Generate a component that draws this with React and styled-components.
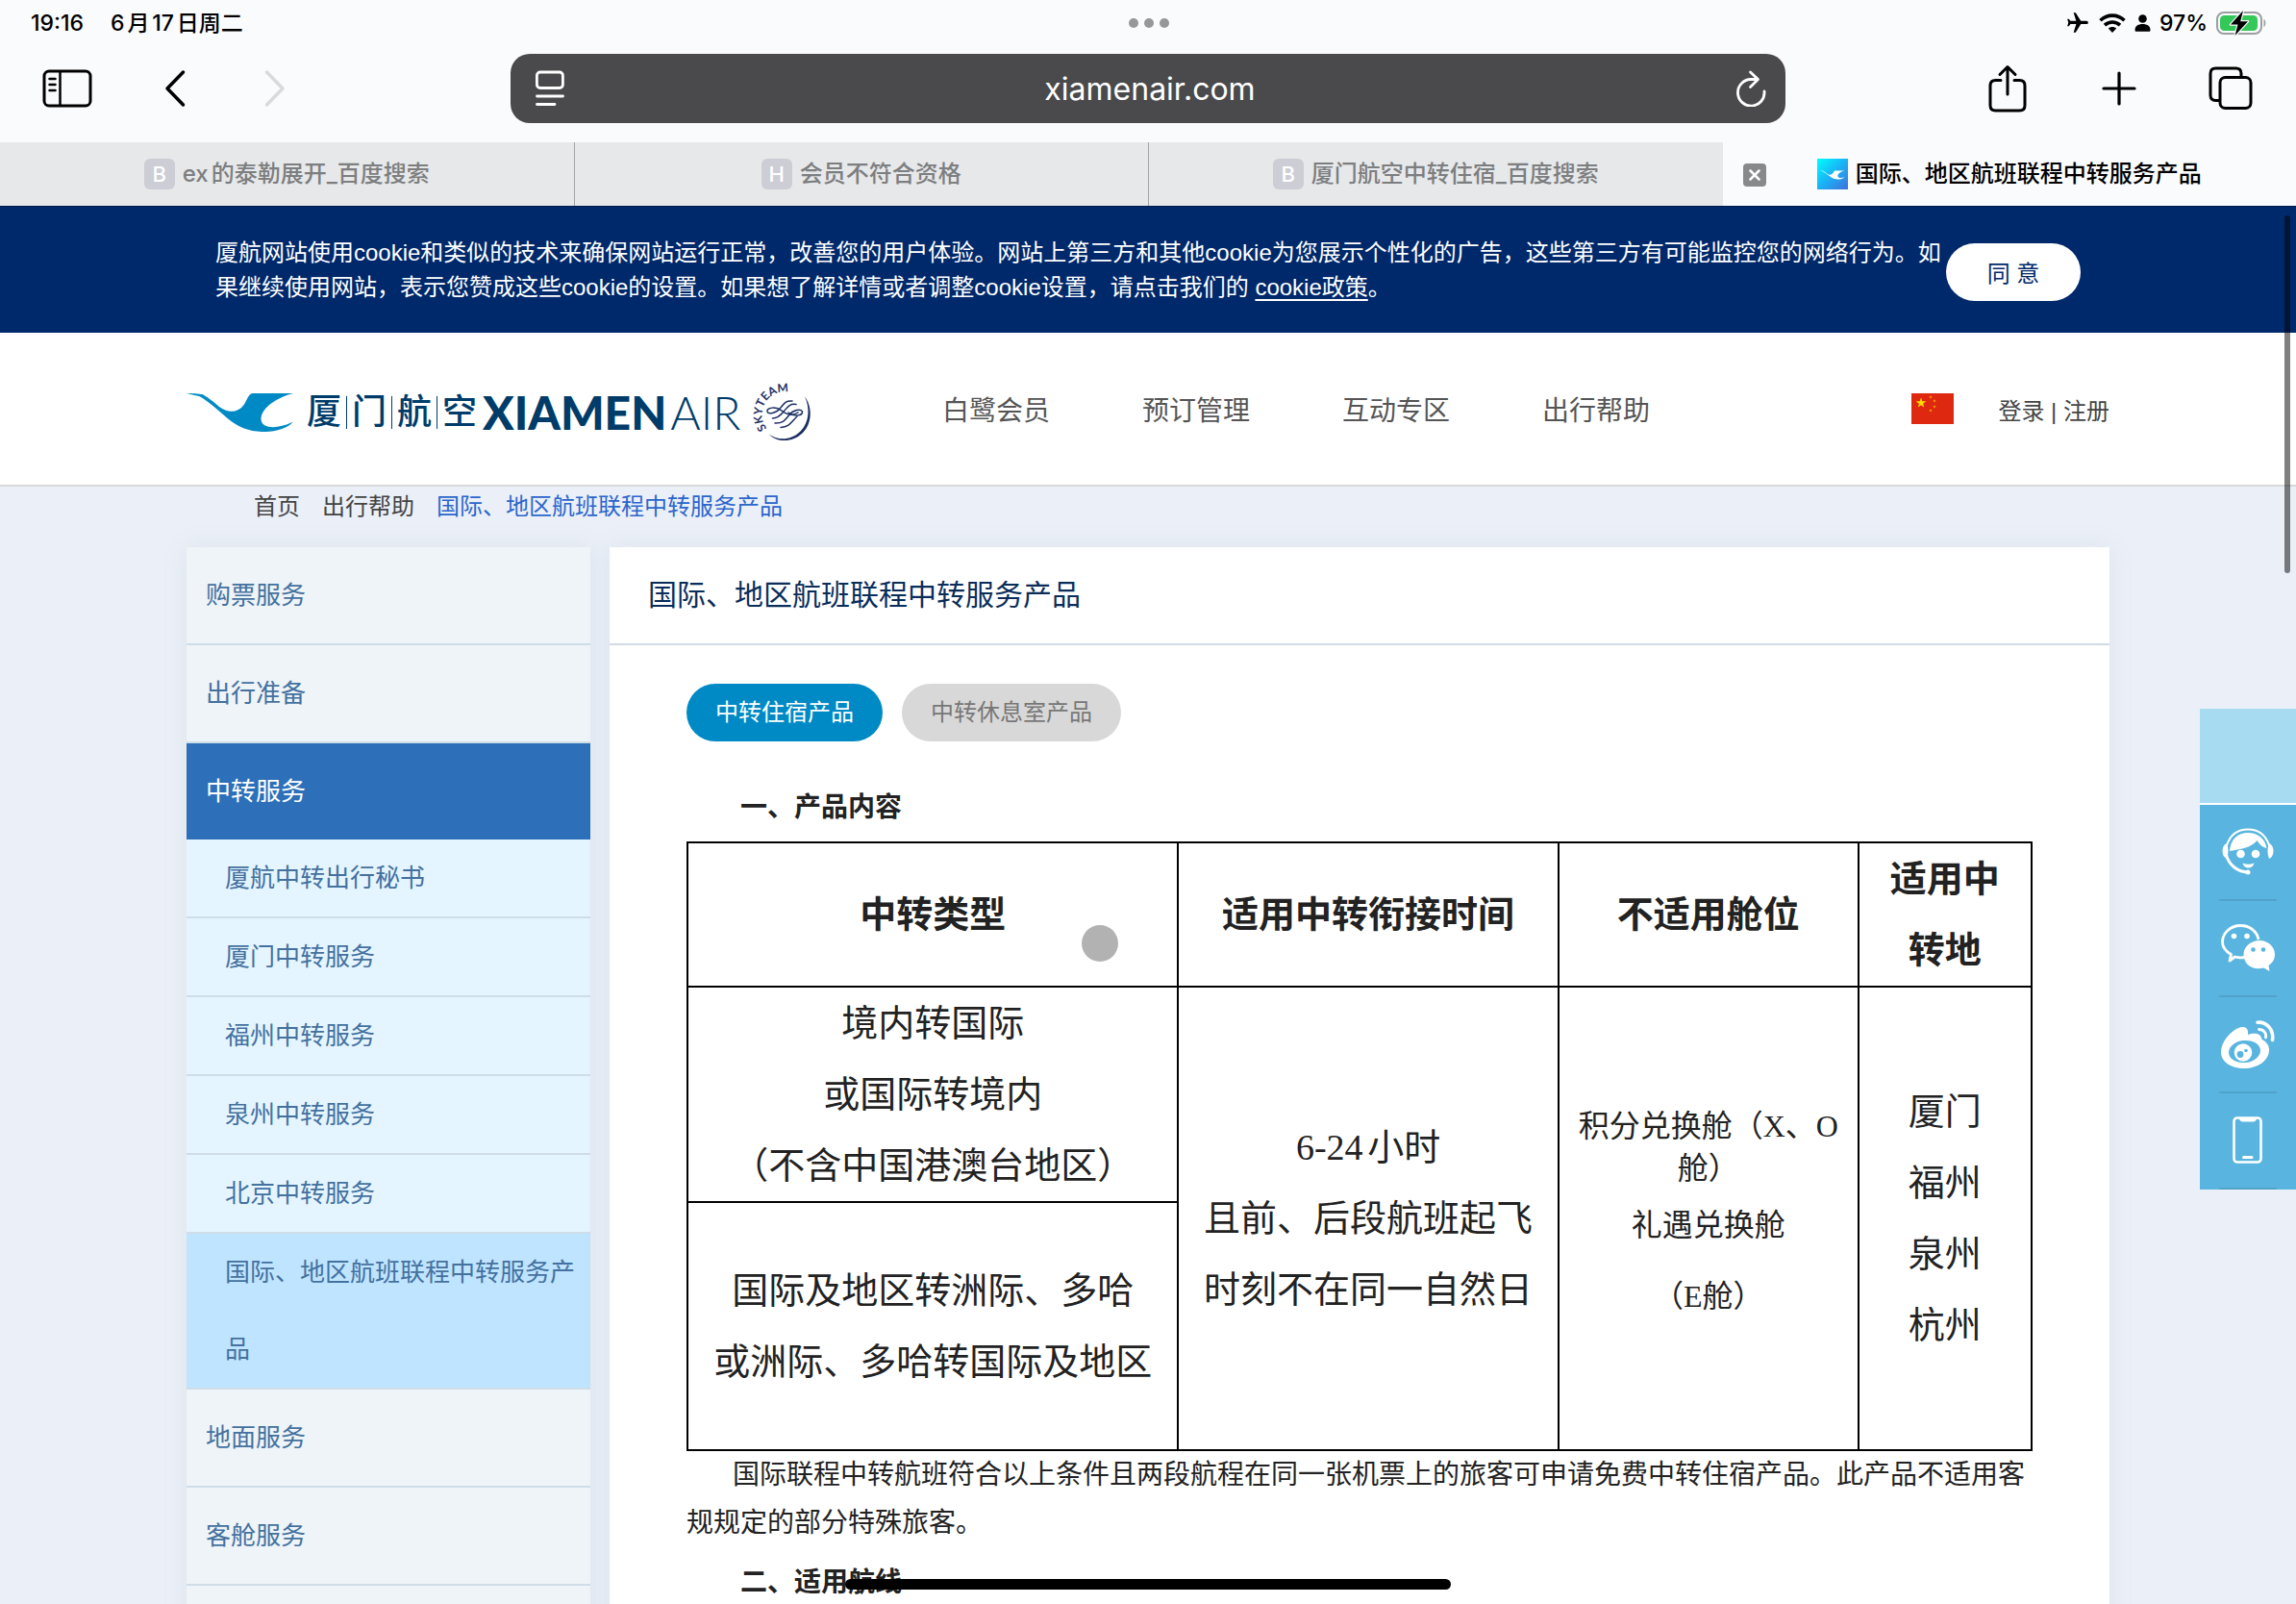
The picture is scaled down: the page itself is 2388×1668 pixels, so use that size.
import React from "react";
import styled, { createGlobalStyle, css } from "styled-components";
import { MdFlight } from "react-icons/md";

const sans = `"Liberation Sans", "Noto Sans CJK SC", sans-serif`;
const system = `Inter, "Noto Sans CJK SC", sans-serif`;
const serif = `"Liberation Serif", "Noto Sans CJK SC", serif`;

const GlobalStyle = createGlobalStyle`
  *, *::before, *::after { box-sizing: border-box; }
  body { margin: 0; background: #ebf0f8; font-family: ${sans}; font-size: 24px; }
  h1, h2, p, ul, ol { margin: 0; padding: 0; }
  ul, ol { list-style: none; }
  a { color: inherit; text-decoration: none; }
  button { margin: 0; padding: 0; border: 0; background: none; font: inherit; color: inherit; cursor: pointer; }
  svg { display: block; }
`;

const Screen = styled.div`
  position: relative;
  display: flex;
  flex-direction: column;
  height: 100vh;
  overflow: hidden;
`;

/* ---------- browser chrome ---------- */

const Chrome = styled.header`
  flex: none;
  background: #fafbfd;
  color: #000;
  font-family: ${system};
`;

const StatusBar = styled.div`
  display: grid;
  grid-template-columns: 1fr auto 1fr;
  align-items: center;
  height: 48px;
  padding: 0 30px 0 32px;
  font-size: 23px;
  font-weight: 500;
  line-height: 32px;
  text-autospace: normal;
`;

const StatusGroup = styled.div`
  display: flex;
  align-items: center;
  justify-content: ${(p) => (p.$end ? "flex-end" : "flex-start")};
  gap: ${(p) => (p.$end ? 9 : 28)}px;
`;

const Dots = styled.button`
  display: flex;
  gap: 6px;
  span {
    width: 10px;
    height: 10px;
    border-radius: 50%;
    background: #969799;
  }
`;

const Plane = styled(MdFlight)`
  width: 26px;
  height: 26px;
  transform: rotate(90deg);
`;

const Toolbar = styled.div`
  display: grid;
  grid-template-columns: 2fr 5fr 2fr;
  align-items: center;
  padding: 8px 0 20px;
`;

const Tools = styled.div`
  display: flex;
  justify-content: ${(p) => (p.$end ? "flex-end" : "flex-start")};
  gap: ${(p) => (p.$end ? 60 : 48)}px;
  padding: ${(p) => (p.$end ? "0 40px 0 0" : "0 0 0 34px")};
`;

const Tool = styled.button`
  display: flex;
  align-items: center;
  justify-content: center;
  width: ${(p) => (p.$wide ? 72 : 56)}px;
  height: 56px;
  color: ${(p) => (p.disabled ? "#d9dadc" : "#000")};
`;

const AddressBar = styled.div`
  display: flex;
  align-items: center;
  height: 72px;
  padding: 0 20px 0 26px;
  border-radius: 20px;
  background: #4a4a4c;
  color: #fff;
`;

const Address = styled.input`
  flex: 1;
  min-width: 0;
  border: 0;
  outline: 0;
  background: none;
  color: inherit;
  font-family: ${system};
  font-size: 32px;
  text-align: center;
`;

const TabStrip = styled.div`
  display: flex;
  height: 66px;
`;

const Tab = styled.div`
  position: relative;
  flex: 1;
  display: flex;
  align-items: center;
  justify-content: center;
  gap: 8px;
  border-right: ${(p) => (p.$divided ? "1px solid #a3a4a6" : "0")};
  font-size: 24px;
  font-weight: 500;
  line-height: 32px;
  text-autospace: normal;
  color: ${(p) => (p.$active ? "#000" : "#7c7e80")};
  background: ${(p) => (p.$active ? "#fafbfd" : "#e7e8ea")};
`;

const Letter = styled.span`
  display: flex;
  align-items: center;
  justify-content: center;
  width: 32px;
  height: 32px;
  border-radius: 6px;
  background: #cdcdd5;
  color: #fff;
  font-size: 22px;
`;

const CloseTab = styled.button`
  position: absolute;
  left: 21px;
  top: 22px;
  display: flex;
  align-items: center;
  justify-content: center;
  width: 24px;
  height: 24px;
  border-radius: 4px;
  background: #88898b;
`;

/* ---------- site ---------- */

const Cookie = styled.section`
  flex: none;
  border-top: 1px solid #001d4d;
  background: #00296b;
  color: #fff;
`;

const Container = styled.div`
  width: 100%;
  max-width: 2000px;
  margin: 0 auto;
`;

const CookieInner = styled(Container)`
  display: flex;
  align-items: center;
  height: 131px;
  padding: 4px 30px 0;
`;

const CookieText = styled.p`
  flex: 1;
  max-width: 1800px;
  padding-bottom: 4px;
  line-height: 36px;
  a { text-decoration: underline; text-underline-offset: 4px; }
`;

const Agree = styled.button`
  flex: none;
  width: 140px;
  height: 60px;
  border-radius: 30px;
  background: #fff;
  color: #00296b;
`;

const SiteHeader = styled.header`
  flex: none;
  border-bottom: 2px solid #d8d8d8;
  background: #fff;
`;

const SiteHeaderInner = styled(Container)`
  display: flex;
  align-items: center;
  height: 158px;
`;

const Logo = styled.a`
  display: flex;
  align-items: center;
  width: 786px;
  padding-top: 8px;
  color: #003c69;
`;

const LogoHan = styled.span`
  display: flex;
  align-items: center;
  gap: 5px;
  margin: 0 6px 0 13px;
  font-size: 36px;
  font-weight: 500;
  line-height: 40px;
  i {
    width: 1px;
    height: 34px;
    background: #003c69;
  }
`;

const LogoLatin = styled.span`
  margin-right: 14px;
  font-family: Lato, sans-serif;
  font-size: 48px;
  font-weight: 300;
  line-height: 46px;
  b {
    margin-right: 4px;
    font-weight: 900;
  }
`;

const SkyTeamMark = styled.svg`
  overflow: visible;
`;

const MainNav = styled.nav`
  display: flex;
  flex: 1;
  gap: 96px;
  color: #555;
  font-size: 28px;
`;

const Account = styled.div`
  display: flex;
  align-items: center;
  gap: 46px;
  color: #444;
`;

const Crumbs = styled.ol`
  display: flex;
  gap: 23px;
  height: 63px;
  padding: 0 70px;
  color: #444;
  line-height: 42px;
  [aria-current] { color: #2b66cc; }
`;

const Columns = styled(Container)`
  display: flex;
  gap: 20px;
  flex: 1;
`;

const panel = css`
  box-shadow: 0 0 24px rgba(120, 140, 160, 0.12);
`;

const Side = styled.aside`
  ${panel}
  flex: none;
  width: 420px;
  background: #eef4f8;
  color: #44719f;
  font-size: 26px;
`;

const SideLink = styled.a`
  display: block;
  padding-left: 20px;
  border-bottom: 2px solid #cfdde8;
  line-height: 100px;
  ${(p) =>
    p.$open &&
    css`
      border-bottom: 0;
      background: #2d70b9;
      color: #fff;
    `}
`;

const SubLink = styled.a`
  display: block;
  padding: 0 12px 0 40px;
  border-bottom: 2px solid #cfdde8;
  background: ${(p) => (p.$current ? "#bfe4ff" : "#e5f5ff")};
  line-height: 80px;
`;

const Main = styled.main`
  ${panel}
  flex: 1;
  min-width: 0;
  background: #fff;
  color: #222;
`;

const Title = styled.h1`
  padding: 0 40px;
  border-bottom: 2px solid #cfdde8;
  color: #0a2d5a;
  font-size: 30px;
  font-weight: 400;
  line-height: 100px;
`;

const Article = styled.div`
  padding: 40px 80px;
  font-size: 28px;
  line-height: 50px;
`;

const Pills = styled.div`
  display: flex;
  gap: 20px;
  margin-bottom: 44px;
`;

const Pill = styled.button`
  height: 60px;
  padding: 0 30px;
  border-radius: 30px;
  font-size: 24px;
  background: ${(p) => (p.$on ? "#008ac5" : "#d8d8d8")};
  color: ${(p) => (p.$on ? "#fff" : "#777")};
`;

const Heading = styled.h2`
  margin: ${(p) => (p.$spaced ? 12 : 0)}px 0 10px;
  text-indent: 2em;
  font-size: 28px;
  font-weight: 700;
`;

const Paragraph = styled.p`
  text-indent: 48px;
`;

const Table = styled.table`
  width: 100%;
  table-layout: fixed;
  border-collapse: collapse;
  font-family: ${serif};
  font-size: 38px;
  line-height: 74px;
  text-align: center;
  text-autospace: normal;
  th, td {
    padding: 0 14px;
    border: 2px solid #000;
    vertical-align: middle;
  }
  th { font-weight: 700; }
`;

const Col = styled.col`
  width: ${(p) => p.$share}%;
`;

const TallRow = styled.tr`
  height: 258px;
`;

const Cabin = styled.p`
  font-size: 32px;
  line-height: ${(p) => (p.$tight ? 44 : 74)}px;
  text-autospace: no-autospace;
`;

/* ---------- floating pieces ---------- */

const Float = styled.aside`
  position: fixed;
  right: 0;
  top: 737px;
  width: 100px;
  background: #59b5df;
`;

const FloatTop = styled.div`
  height: 100px;
  border-bottom: 2px solid #fff;
  background: #a6dbf2;
`;

const FloatButton = styled.button`
  display: flex;
  align-items: center;
  justify-content: center;
  width: 60px;
  height: 100px;
  margin: 0 auto;
  border-bottom: 2px solid #50a2c9;
  color: #fff;
`;

const Touch = styled.div`
  position: fixed;
  left: 1125px;
  top: 962px;
  width: 38px;
  height: 38px;
  border-radius: 50%;
  background: #b2b2b2;
`;

const ScrollThumb = styled.div`
  position: fixed;
  right: 6px;
  top: 224px;
  width: 6px;
  height: 372px;
  border-radius: 3px;
  background: rgba(0, 0, 0, 0.5);
`;

const HomeBar = styled.div`
  position: fixed;
  left: 50%;
  bottom: 15px;
  width: 630px;
  height: 11px;
  margin-left: -315px;
  border-radius: 6px;
  background: #000;
`;

/* ---------- drawings ---------- */

const Wifi = () => (
  <svg width="28" height="22" viewBox="0 0 28 22" fill="none" stroke="#000" strokeWidth="3.6" aria-hidden="true">
    <path d="M1.5 8.2C8.6 1.4 19.400 1.4 26.500 8.200" />
    <path d="M6 13.100C10.600 8.900 17.400 8.900 22 13.100" />
    <path d="M14 21L9.800 16.600C12.200 14.600 15.800 14.600 18.200 16.600Z" fill="#000" stroke="none" />
  </svg>
);

const Person = () => (
  <svg width="17" height="18" viewBox="0 0 17 18" aria-hidden="true">
    <circle cx="8.500" cy="4.500" r="4.300" />
    <path d="M0.500 16C0.500 12 4 10 8.500 10S16.500 12 16.500 16C16.500 17.300 16 17.800 15 17.800H2C1 17.800 .5 17.300 .5 16Z" />
  </svg>
);

const Battery = () => (
  <svg width="53" height="26" viewBox="0 0 53 26" aria-hidden="true">
    <rect x="1" y="2" width="46" height="22" rx="7" fill="none" stroke="#9d9ea0" strokeWidth="2" />
    <path d="M49.500 9C52 10 52 16 49.500 17Z" fill="#9d9ea0" />
    <rect x="4" y="5" width="39" height="16" rx="4.500" fill="#34c759" />
    <path d="M28 0L15 14.500H22.500L19.500 26L33 11.200H25.200Z" fill="#000" stroke="#fafbfd" strokeWidth="2.400" paintOrder="stroke" strokeLinejoin="round" />
  </svg>
);

const SidebarIcon = () => (
  <svg width="52" height="42" viewBox="0 0 52 42" fill="none" stroke="currentColor" strokeWidth="3" aria-hidden="true">
    <rect x="2" y="3" width="48" height="36" rx="5" />
    <path d="M18.500 3V39" strokeWidth="2.500" />
    <path d="M7.500 11H13.500M7.500 17H13.500M7.500 23H13.500" strokeWidth="2.500" strokeLinecap="round" />
  </svg>
);

const Chevron = ({ d }) => (
  <svg width="24" height="40" viewBox="0 0 24 40" fill="none" stroke="currentColor" strokeWidth="3.500" strokeLinecap="round" strokeLinejoin="round" aria-hidden="true">
    <path d={d} />
  </svg>
);

const Reader = () => (
  <svg width="30" height="38" viewBox="0 0 30 38" fill="none" stroke="currentColor" strokeWidth="2.800" strokeLinecap="round" aria-hidden="true">
    <rect x="1.400" y="2" width="27" height="16.500" rx="3.500" />
    <path d="M1.500 27H28.500M1.500 35.500H20" />
  </svg>
);

const Reload = () => (
  <svg width="32" height="38" viewBox="0 0 32 38" fill="none" stroke="currentColor" strokeWidth="2.800" strokeLinecap="round" strokeLinejoin="round" aria-hidden="true">
    <path d="M30 22A13.800 13.800 0 1 1 16 9.500H22.500" />
    <path d="M15.500 2L23.500 9.500L15.500 17.500" />
  </svg>
);

const Share = () => (
  <svg width="40" height="50" viewBox="0 0 40 50" fill="none" stroke="currentColor" strokeWidth="3" strokeLinecap="round" strokeLinejoin="round" aria-hidden="true">
    <path d="M13 16.500H7.500Q2 16.500 2 22V42.500Q2 48 7.500 48H32.500Q38 48 38 42.500V22Q38 16.500 32.500 16.500H27" />
    <path d="M20 31V3M12 10.500L20 2.500L28 10.500" />
  </svg>
);

const Plus = () => (
  <svg width="36" height="36" viewBox="0 0 36 36" stroke="currentColor" strokeWidth="3.200" strokeLinecap="round" aria-hidden="true">
    <path d="M18 2V34M2 18H34" />
  </svg>
);

const TabsIcon = () => (
  <svg width="46" height="46" viewBox="0 0 46 46" fill="none" stroke="currentColor" strokeWidth="3" aria-hidden="true">
    <path d="M11.500 35.500H7.500Q2 35.500 2 30V7.500Q2 2 7.500 2H28.500Q34 2 34 7.500V11" />
    <rect x="12" y="11.500" width="32" height="32" rx="5.500" />
  </svg>
);

const BirdIcon = () => (
  <svg width="32" height="32" viewBox="0 0 32 32" aria-hidden="true">
    <defs>
      <linearGradient id="bird" x1="0" y1="0" x2="1" y2="1">
        <stop offset="0" stopColor="#0ff" />
        <stop offset=".5" stopColor="#1ab2f5" />
        <stop offset="1" stopColor="#4070dc" />
      </linearGradient>
    </defs>
    <rect width="32" height="32" fill="url(#bird)" />
    <path d="M3 12C5.500 12 7.500 13.500 10 15.500C13 18 15.500 17 18 12.500H28.500C23 14 21 16.500 21.500 18.500C22.500 20.500 25.500 20.500 28.500 19C24.500 22.800 18 22.300 13 18.300C9 15.200 6.500 13.200 3 12Z" fill="#fff" />
  </svg>
);

const Egret = () => (
  <svg width="112" height="40" viewBox="0 0 112 40" aria-hidden="true">
    <path d="M0 0C6 0 12 .4 17 1.300C23 4.500 28 9 34 14C42 20 52 20.500 58 14C63 8.500 64 .3 69 0H111C97 3.500 82 12 78 23C75 34 86 36.500 96 34.500C102 33.500 107 31.500 110.500 29.500C107 35.500 93 40 82 40C62 40.500 50 33 38 22C27 12 18 5.500 13 3Q6 1.500 0 0Z" fill="#008ac5" />
  </svg>
);

const SkyTeam = () => (
  <SkyTeamMark width="62" height="64" viewBox="0 0 62 64" fill="none" stroke="#1c2f63" strokeLinecap="round" role="img" aria-label="SkyTeam">
    <path id="sky-arc" d="M13.500 48.500A23.500 23.500 0 1 1 55.500 34" stroke="none" />
    <text fill="#1c2f63" stroke="none" fontFamily="Lato, sans-serif" fontSize="12" fontWeight="700">
      <textPath href="#sky-arc">SKYTEAM</textPath>
    </text>
    <path d="M53 15.500C61 26 61 43 51 53C41 63 25 64 15.500 54.500C25 61.500 39 61 48.500 51.500C58 42 58.500 27 53 15.500Z" fill="#1c2f63" stroke="none" />
    <g strokeWidth="1.500">
      <path d="M40 20C32 19 31 24 27 28C23 33 15 34 14 31C13 27 23 25 29 30C35 35 40 36 46 32" />
      <path d="M44 23.500C37 22 35 27 31 31C27 36 24 38 19.500 38" />
      <path d="M22 43C31 43.500 33 39 37 34.500C41 29 49 28 50.500 31C51 35 42 37 36 32" />
      <path d="M28 47.500C37 47 39 42 45 36" />
    </g>
  </SkyTeamMark>
);

const star = (cx, cy, r) =>
  Array.from({ length: 10 }, (_, i) => {
    const a = (Math.PI * i) / 5 - Math.PI / 2;
    const q = i % 2 ? r * 0.4 : r;
    return `${cx + q * Math.cos(a)},${cy + q * Math.sin(a)}`;
  }).join(" ");

const Flag = () => (
  <svg width="44" height="32" viewBox="0 0 44 32" role="img" aria-label="中国">
    <rect width="44" height="32" fill="#de2910" />
    <g fill="#ffde00">
      <polygon points={star(10, 10, 5.5)} />
      <g opacity=".6">
        <polygon points={star(20, 4, 2)} />
        <polygon points={star(24, 8, 2)} />
        <polygon points={star(24, 14, 2)} />
        <polygon points={star(20, 18, 2)} />
      </g>
    </g>
  </svg>
);

const Agent = () => (
  <svg width="56" height="50" viewBox="0 0 56 50" aria-hidden="true">
    <g fill="none" stroke="#fff" strokeLinecap="round">
      <path d="M6 18C10 6 18 1.500 28 1.500S46 6 50 18" strokeWidth="2" />
      <path d="M5.500 28C8 38 17 46 28.500 46" strokeWidth="3" />
    </g>
    <circle cx="28" cy="46" r="2.500" fill="#fff" />
    <path d="M6 16C0 18 0 30 6 32C8 27 8 21 6 16ZM50 16C56 18 56 30 50 32C48 27 48 21 50 16Z" fill="#fff" />
    <path d="M9 24C10 11 18 5 28 5S46 11 47.500 21C43 20 40 17 37.500 13C31 21 20 22 9 24Z" fill="#fff" />
    <circle cx="20.500" cy="27" r="4.300" fill="#fff" />
    <circle cx="36" cy="27" r="4.300" fill="#fff" />
    <path d="M22.500 36.500Q28.500 39 34.500 36.500Q33 41.500 28.500 41.500T22.500 36.500Z" fill="#fff" />
  </svg>
);

const WeChat = () => (
  <svg width="56" height="50" viewBox="0 0 56 50" aria-hidden="true">
    <path d="M24.500 34.500C20 35.300 17.500 35 14.500 34L9 38L10.500 31.500C4.500 28 1.500 23.500 1.500 18.500C1.500 9 10 1.500 20.500 1.500C30 1.500 37.500 7.500 39 16" fill="none" stroke="#fff" strokeWidth="2.800" strokeLinejoin="round" />
    <circle cx="13.500" cy="12.500" r="2.800" fill="#fff" />
    <circle cx="27" cy="12.500" r="2.800" fill="#fff" />
    <path d="M40 17C49 17 56 23.500 56 31.500C56 36.500 53.500 40.500 49.500 43L50.500 49L44.500 45.500C32 48.500 23.500 41.500 23.500 31.500C23.500 23.500 31 17 40 17Z" fill="#fff" />
    <circle cx="33.500" cy="26.500" r="2.300" fill="#59b5df" />
    <circle cx="44" cy="26.500" r="2.300" fill="#59b5df" />
  </svg>
);

const Weibo = () => (
  <svg width="56" height="50" viewBox="0 0 56 50" aria-hidden="true">
    <path d="M0 33C0 23 9 12 18 8C24 5.500 29 7 28 15C34 12.500 42 13 42.500 20C47 22 50 25.500 50 31C50 42 38 50 24 50C10 50 0 43 0 33Z" fill="#fff" />
    <ellipse cx="24.500" cy="32.500" rx="16.500" ry="11.500" fill="#59b5df" transform="rotate(-7 24.500 32.500)" />
    <circle cx="23" cy="33.500" r="9.300" fill="#fff" />
    <circle cx="20" cy="35.500" r="3.400" fill="#59b5df" />
    <circle cx="26" cy="31.500" r="1.800" fill="#59b5df" />
    <g fill="none" stroke="#fff" strokeWidth="3.600" strokeLinecap="round">
      <path d="M38 2.200C48 1.500 55 10 53.500 20.500" />
      <path d="M39.500 9.500C44.500 9.500 47.500 13.500 46.500 18" strokeWidth="2.800" />
    </g>
  </svg>
);

const Phone = () => (
  <svg width="32" height="50" viewBox="0 0 32 50" aria-hidden="true">
    <rect x="1.500" y="1.500" width="28" height="46" rx="3.500" fill="none" stroke="#fff" strokeWidth="2.600" />
    <path d="M7 1.500H25Q25 5.500 21 5.500H11Q7 5.500 7 1.500Z" fill="#fff" />
    <path d="M11.500 42.500H20" stroke="#fff" strokeWidth="3" strokeLinecap="round" />
  </svg>
);

const tabs = [
  { letter: "B", name: "ex的泰勒展开_百度搜索" },
  { letter: "H", name: "会员不符合资格" },
  { letter: "B", name: "厦门航空中转住宿_百度搜索" },
];

const transfers = [
  "厦航中转出行秘书",
  "厦门中转服务",
  "福州中转服务",
  "泉州中转服务",
  "北京中转服务",
  "国际、地区航班联程中转服务产品",
];

export default function App() {
  return (
    <Screen>
      <GlobalStyle />
      <Chrome>
        <StatusBar>
          <StatusGroup>
            <span>19:16</span>
            <span>6月17日周二</span>
          </StatusGroup>
          <Dots aria-label="多任务">
            <span />
            <span />
            <span />
          </Dots>
          <StatusGroup $end>
            <Plane />
            <Wifi />
            <Person />
            <span>97%</span>
            <Battery />
          </StatusGroup>
        </StatusBar>
        <Toolbar>
          <Tools>
            <Tool $wide aria-label="边栏"><SidebarIcon /></Tool>
            <Tool aria-label="后退"><Chevron d="M20.500 3L4 20L20.500 37" /></Tool>
            <Tool aria-label="前进" disabled><Chevron d="M3.500 3L20 20L3.500 37" /></Tool>
          </Tools>
          <AddressBar>
            <button aria-label="页面菜单"><Reader /></button>
            <Address aria-label="地址" defaultValue="xiamenair.com" />
            <button aria-label="重新载入"><Reload /></button>
          </AddressBar>
          <Tools $end>
            <Tool aria-label="共享"><Share /></Tool>
            <Tool aria-label="新标签页"><Plus /></Tool>
            <Tool aria-label="标签页概览"><TabsIcon /></Tool>
          </Tools>
        </Toolbar>
        <TabStrip>
          {tabs.map((tab, i) => (
            <Tab key={tab.name} $divided={i < tabs.length - 1}>
              <Letter>{tab.letter}</Letter>
              <span>{tab.name}</span>
            </Tab>
          ))}
          <Tab $active>
            <CloseTab aria-label="关闭标签页">
              <svg width="12" height="12" viewBox="0 0 12 12" stroke="#fff" strokeWidth="2.500" strokeLinecap="round">
                <path d="M1.500 1.500L10.500 10.500M10.500 1.500L1.500 10.500" />
              </svg>
            </CloseTab>
            <BirdIcon />
            <span>国际、地区航班联程中转服务产品</span>
          </Tab>
        </TabStrip>
      </Chrome>

      <Cookie>
        <CookieInner>
          <CookieText>
            厦航网站使用cookie和类似的技术来确保网站运行正常，改善您的用户体验。网站上第三方和其他cookie为您展示个性化的广告，这些第三方有可能监控您的网络行为。如果继续使用网站，表示您赞成这些cookie的设置。如果想了解详情或者调整cookie设置，请点击我们的 <a href="#cookie">cookie政策</a>。
          </CookieText>
          <Agree>同 意</Agree>
        </CookieInner>
      </Cookie>

      <SiteHeader>
        <SiteHeaderInner>
          <Logo href="#home">
            <Egret />
            <LogoHan>
              厦<i />门<i />航<i />空
            </LogoHan>
            <LogoLatin><b>XIAMEN</b>AIR</LogoLatin>
            <SkyTeam />
          </Logo>
          <MainNav>
            <a href="#member">白鹭会员</a>
            <a href="#booking">预订管理</a>
            <a href="#interact">互动专区</a>
            <a href="#help">出行帮助</a>
          </MainNav>
          <Account>
            <Flag />
            <span><a href="#login">登录</a> | <a href="#register">注册</a></span>
          </Account>
        </SiteHeaderInner>
      </SiteHeader>

      <Container as="nav">
        <Crumbs>
          <li><a href="#home">首页</a></li>
          <li><a href="#help">出行帮助</a></li>
          <li aria-current="page">国际、地区航班联程中转服务产品</li>
        </Crumbs>
      </Container>

      <Columns>
        <Side>
          <SideLink href="#ticket">购票服务</SideLink>
          <SideLink href="#prepare">出行准备</SideLink>
          <SideLink href="#transfer" $open>中转服务</SideLink>
          {transfers.map((name, i) => (
            <SubLink key={name} href="#transfer" $current={i === transfers.length - 1}>{name}</SubLink>
          ))}
          <SideLink href="#ground">地面服务</SideLink>
          <SideLink href="#cabin">客舱服务</SideLink>
        </Side>
        <Main>
          <Title>国际、地区航班联程中转服务产品</Title>
          <Article>
            <Pills>
              <Pill $on>中转住宿产品</Pill>
              <Pill>中转休息室产品</Pill>
            </Pills>
            <Heading>一、产品内容</Heading>
            <Table>
              <colgroup>
                <Col $share={36.5} />
                <Col $share={28.3} />
                <Col $share={22.3} />
                <Col $share={12.9} />
              </colgroup>
              <thead>
                <tr>
                  <th>中转类型</th>
                  <th>适用中转衔接时间</th>
                  <th>不适用舱位</th>
                  <th>适用中转地</th>
                </tr>
              </thead>
              <tbody>
                <tr>
                  <td>境内转国际<br />或国际转境内<br />（不含中国港澳台地区）</td>
                  <td rowSpan={2}>6-24小时<br />且前、后段航班起飞<br />时刻不在同一自然日</td>
                  <td rowSpan={2}>
                    <Cabin $tight>积分兑换舱（X、O舱）</Cabin>
                    <Cabin>礼遇兑换舱</Cabin>
                    <Cabin>（E舱）</Cabin>
                  </td>
                  <td rowSpan={2}>厦门<br />福州<br />泉州<br />杭州</td>
                </tr>
                <TallRow>
                  <td>国际及地区转洲际、多哈<br />或洲际、多哈转国际及地区</td>
                </TallRow>
              </tbody>
            </Table>
            <Paragraph>
              国际联程中转航班符合以上条件且两段航程在同一张机票上的旅客可申请免费中转住宿产品。此产品不适用客规规定的部分特殊旅客。
            </Paragraph>
            <Heading $spaced>二、适用航线</Heading>
          </Article>
        </Main>
      </Columns>

      <Float>
        <FloatTop />
        <FloatButton aria-label="在线客服"><Agent /></FloatButton>
        <FloatButton aria-label="微信"><WeChat /></FloatButton>
        <FloatButton aria-label="微博"><Weibo /></FloatButton>
        <FloatButton aria-label="手机应用"><Phone /></FloatButton>
      </Float>
      <Touch />
      <ScrollThumb />
      <HomeBar />
    </Screen>
  );
}
